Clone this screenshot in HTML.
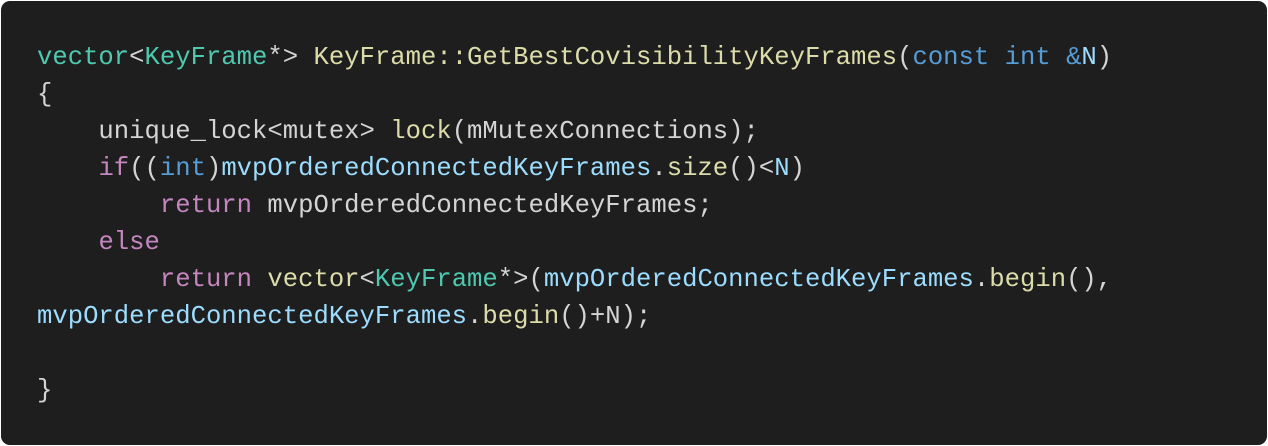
<!DOCTYPE html>
<html><head><meta charset="utf-8"><style>
html,body{margin:0;padding:0;background:#fff;width:1268px;height:446px;overflow:hidden}
.box{position:absolute;left:1px;top:1px;width:1266px;height:444px;background:#1e1e1e;border-radius:9px}
pre{position:absolute;left:36px;top:38px;margin:0;font-family:"Liberation Mono",monospace;font-size:25.6px;line-height:37px;color:#d4d4d4;white-space:pre}
.t{color:#4ec9b0}.f{color:#dcdcaa}.k{color:#569cd6}.c{color:#c586c0}.v{color:#9cdcfe}
</style></head><body><div class="box"><pre><span class="t">vector</span>&lt;<span class="t">KeyFrame</span>*&gt; <span class="f">KeyFrame::GetBestCovisibilityKeyFrames</span>(<span class="k">const</span> <span class="k">int</span> <span class="k">&amp;</span><span class="v">N</span>)
{
    unique_lock&lt;mutex&gt; <span class="f">lock</span>(mMutexConnections);
    <span class="c">if</span>((<span class="k">int</span>)<span class="v">mvpOrderedConnectedKeyFrames</span>.<span class="f">size</span>()&lt;<span class="v">N</span>)
        <span class="c">return</span> mvpOrderedConnectedKeyFrames;
    <span class="c">else</span>
        <span class="c">return</span> <span class="f">vector</span>&lt;<span class="t">KeyFrame</span>*&gt;(<span class="v">mvpOrderedConnectedKeyFrames</span>.<span class="f">begin</span>(),
<span class="v">mvpOrderedConnectedKeyFrames</span>.<span class="f">begin</span>()+N);

}</pre></div></body></html>
